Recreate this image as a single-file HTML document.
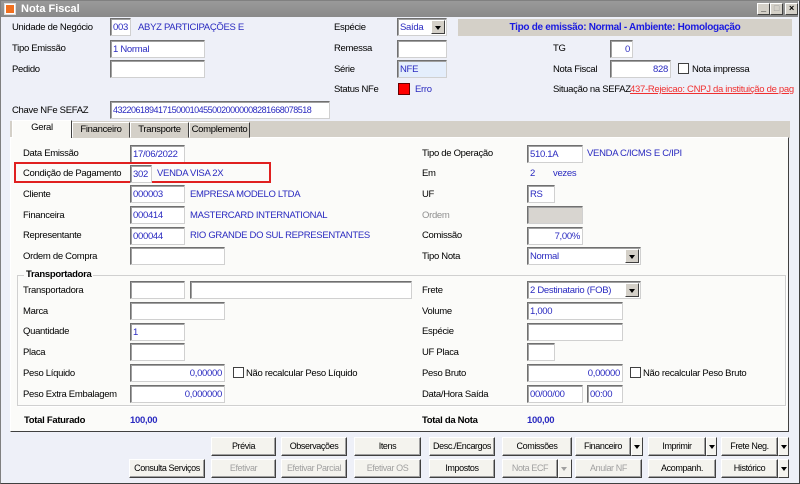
<!DOCTYPE html>
<html><head><meta charset="utf-8"><style>
*{box-sizing:border-box;margin:0;padding:0}
body{width:800px;height:484px;overflow:hidden;background:#eef0f8;font-family:"Liberation Sans",sans-serif;font-size:9.5px;letter-spacing:-0.3px;color:#000;position:relative}
.a{position:absolute;white-space:nowrap}
.win{position:absolute;left:0;top:0;width:800px;height:484px;border:1px solid #808080;border-right-color:#404040;border-bottom-color:#404040}
.tb{position:absolute;left:1px;top:1px;width:797px;height:16px;background:linear-gradient(#9a9a9a,#8a8a8a);color:#fff;font-weight:bold;font-size:11px;letter-spacing:0;line-height:16px;padding-left:20px}
.tbb{position:absolute;top:3px;width:13px;height:12px;background:#d4d0c8;border:1px solid;border-color:#fff #404040 #404040 #fff;font-size:9px;line-height:9px;text-align:center;color:#000;font-weight:bold}
.l{position:absolute;white-space:nowrap;line-height:12px}
.i{position:absolute;height:18px;background:#fff;border:1px solid;border-color:#707070 #d0d0d0 #d0d0d0 #707070;box-shadow:inset 1px 1px 0 #a0a0a0;color:#2a2ac0;line-height:17px;padding:0 2px;white-space:nowrap;overflow:hidden}
.r{text-align:right}
.v{position:absolute;color:#2a2ac0;white-space:nowrap;line-height:12px}
.dd{position:absolute;right:1px;top:1px;width:14px;height:14px;background:#d4d0c8;border:1px solid;border-color:#fff #404040 #404040 #fff}
.dd:after{content:"";position:absolute;left:3px;top:5px;border:3px solid transparent;border-top:4px solid #000;border-bottom:0}
.cb{position:absolute;width:11px;height:11px;background:#fff;border:1px solid #404040}
.btn{position:absolute;height:19px;background:#f4f3ee;border:1px solid;border-color:#fff #404040 #404040 #fff;box-shadow:inset -1px -1px 0 #a0a0a0;text-align:center;line-height:17px;font-size:9px;letter-spacing:-0.4px;white-space:nowrap;overflow:hidden}
.dis{color:#a0a0a0}
.ar{position:absolute;height:19px;background:#f4f3ee;border:1px solid;border-color:#fff #404040 #404040 #fff}
.ar:after{content:"";position:absolute;left:2px;top:7px;border:3px solid transparent;border-top:4px solid #000;border-bottom:0}
.ar.dis:after{border-top-color:#a0a0a0}
.tab{position:absolute;top:122px;height:16px;border:1px solid;border-color:#fff #404040 transparent #fff;line-height:14px;text-align:center;background:#d4d0c8}
</style></head><body>
<div class="win"></div>
<div class="tb">Nota Fiscal</div>
<div class="a" style="left:4px;top:3px;width:12px;height:12px;background:#fff;border:1px solid #ddd"><div style="margin:1px;width:8px;height:8px;background:#f07020"></div></div>
<div class="tbb" style="left:757px">_</div><div class="tbb" style="left:770px;color:#999">□</div><div class="tbb" style="left:785px">×</div>

<div class="l" style="left:12px;top:22px">Unidade de Negócio</div>
<div class="i" style="left:110px;top:18px;width:21px">003</div>
<div class="v" style="left:138px;top:22px">ABYZ PARTICIPAÇÕES E</div>
<div class="l" style="left:334px;top:22px">Espécie</div>
<div class="i" style="left:397px;top:18px;width:50px;color:#2a2ac0">Saída<div class="dd"></div></div>
<div class="a" style="left:458px;top:19px;width:334px;height:17px;background:#d4d0c8;color:#1a1ae0;font-weight:bold;text-align:center;line-height:17px;font-size:10px">Tipo de emissão: Normal - Ambiente: Homologação</div>

<div class="l" style="left:12px;top:43px">Tipo Emissão</div>
<div class="i" style="left:110px;top:40px;width:95px">1 Normal</div>
<div class="l" style="left:334px;top:43px">Remessa</div>
<div class="i" style="left:397px;top:40px;width:50px"></div>
<div class="l" style="left:553px;top:43px">TG</div>
<div class="i r" style="left:610px;top:40px;width:23px">0</div>

<div class="l" style="left:12px;top:64px">Pedido</div>
<div class="i" style="left:110px;top:60px;width:95px"></div>
<div class="l" style="left:334px;top:64px">Série</div>
<div class="i" style="left:397px;top:60px;width:50px;background:#e4eefc">NFE</div>
<div class="l" style="left:553px;top:64px">Nota Fiscal</div>
<div class="i r" style="left:610px;top:60px;width:61px">828</div>
<div class="cb" style="left:678px;top:63px"></div>
<div class="l" style="left:692px;top:64px">Nota impressa</div>

<div class="l" style="left:334px;top:84px">Status NFe</div>
<div class="a" style="left:398px;top:83px;width:12px;height:12px;background:#f00;border:1px solid #600"></div>
<div class="v" style="left:415px;top:84px">Erro</div>
<div class="l" style="left:553px;top:84px">Situação na SEFAZ</div>
<div class="a" style="left:630px;top:84px;color:#f03030;text-decoration:underline;line-height:12px;width:164px;overflow:hidden">437-Rejeicao: CNPJ da instituição de pagar</div>

<div class="l" style="left:12px;top:105px">Chave NFe SEFAZ</div>
<div class="i" style="left:110px;top:101px;width:220px;font-size:9px;letter-spacing:-0.5px">43220618941715000104550020000008281668078518</div>

<div class="a" style="left:10px;top:121px;width:780px;height:17px;background:#d4d0c8"></div>
<div class="a" style="left:10px;top:137px;width:779px;height:295px;background:#fbfbf9;border:1px solid;border-color:#fff #404040 #404040 #fff"></div>
<div class="tab" style="left:12px;width:60px;top:120px;height:18px;background:#fbfbf9;border-bottom:none">Geral</div>
<div class="tab" style="left:72px;width:58px">Financeiro</div>
<div class="tab" style="left:130px;width:59px">Transporte</div>
<div class="tab" style="left:189px;width:61px">Complemento</div>

<div class="l" style="left:23px;top:148px">Data Emissão</div>
<div class="i" style="left:130px;top:145px;width:55px">17/06/2022</div>
<div class="a" style="left:14px;top:162px;width:257px;height:21px;border:2px solid #e02020"></div>
<div class="l" style="left:23px;top:168px">Condição de Pagamento</div>
<div class="i" style="left:130px;top:165px;width:22px">302</div>
<div class="v" style="left:157px;top:168px">VENDA VISA 2X</div>
<div class="l" style="left:23px;top:189px">Cliente</div>
<div class="i" style="left:130px;top:185px;width:55px">000003</div>
<div class="v" style="left:190px;top:189px">EMPRESA MODELO LTDA</div>
<div class="l" style="left:23px;top:210px">Financeira</div>
<div class="i" style="left:130px;top:206px;width:55px">000414</div>
<div class="v" style="left:190px;top:210px">MASTERCARD INTERNATIONAL</div>
<div class="l" style="left:23px;top:230px">Representante</div>
<div class="i" style="left:130px;top:227px;width:55px">000044</div>
<div class="v" style="left:190px;top:230px">RIO GRANDE DO SUL REPRESENTANTES</div>
<div class="l" style="left:23px;top:251px">Ordem de Compra</div>
<div class="i" style="left:130px;top:247px;width:95px"></div>

<div class="l" style="left:422px;top:148px">Tipo de Operação</div>
<div class="i" style="left:527px;top:145px;width:56px">510.1A</div>
<div class="v" style="left:587px;top:148px">VENDA C/ICMS E C/IPI</div>
<div class="l" style="left:422px;top:168px">Em</div>
<div class="v" style="left:530px;top:168px">2</div><div class="v" style="left:553px;top:168px">vezes</div>
<div class="l" style="left:422px;top:189px">UF</div>
<div class="i" style="left:527px;top:185px;width:28px">RS</div>
<div class="l" style="left:422px;top:210px;color:#909090">Ordem</div>
<div class="i" style="left:527px;top:206px;width:56px;background:#d8d5d0"></div>
<div class="l" style="left:422px;top:230px">Comissão</div>
<div class="i r" style="left:527px;top:227px;width:56px">7,00%</div>
<div class="l" style="left:422px;top:251px">Tipo Nota</div>
<div class="i" style="left:527px;top:247px;width:114px">Normal<div class="dd"></div></div>

<div class="a" style="left:17px;top:275px;width:769px;height:131px;border:1px solid #d0d0d0;box-shadow:1px 1px 0 #fff"></div>
<div class="a" style="left:24px;top:269px;padding:0 2px;background:#fbfbf9;font-weight:bold;line-height:12px">Transportadora</div>

<div class="l" style="left:23px;top:285px">Transportadora</div>
<div class="i" style="left:130px;top:281px;width:55px"></div>
<div class="i" style="left:190px;top:281px;width:222px"></div>
<div class="l" style="left:422px;top:285px">Frete</div>
<div class="i" style="left:527px;top:281px;width:114px">2 Destinatario (FOB)<div class="dd"></div></div>
<div class="l" style="left:23px;top:306px">Marca</div>
<div class="i" style="left:130px;top:302px;width:95px"></div>
<div class="l" style="left:422px;top:306px">Volume</div>
<div class="i" style="left:527px;top:302px;width:96px">1,000</div>
<div class="l" style="left:23px;top:326px">Quantidade</div>
<div class="i" style="left:130px;top:323px;width:55px">1</div>
<div class="l" style="left:422px;top:326px">Espécie</div>
<div class="i" style="left:527px;top:323px;width:96px"></div>
<div class="l" style="left:23px;top:347px">Placa</div>
<div class="i" style="left:130px;top:343px;width:55px"></div>
<div class="l" style="left:422px;top:347px">UF Placa</div>
<div class="i" style="left:527px;top:343px;width:28px"></div>
<div class="l" style="left:23px;top:368px">Peso Líquido</div>
<div class="i r" style="left:130px;top:364px;width:95px">0,00000</div>
<div class="cb" style="left:233px;top:367px"></div>
<div class="l" style="left:246px;top:368px">Não recalcular Peso Líquido</div>
<div class="l" style="left:422px;top:368px">Peso Bruto</div>
<div class="i r" style="left:527px;top:364px;width:96px">0,00000</div>
<div class="cb" style="left:630px;top:367px"></div>
<div class="l" style="left:643px;top:368px">Não recalcular Peso Bruto</div>
<div class="l" style="left:23px;top:389px">Peso Extra Embalagem</div>
<div class="i r" style="left:130px;top:385px;width:95px">0,000000</div>
<div class="l" style="left:422px;top:389px">Data/Hora Saída</div>
<div class="i" style="left:527px;top:385px;width:56px">00/00/00</div>
<div class="i" style="left:587px;top:385px;width:36px">00:00</div>

<div class="l" style="left:24px;top:415px;font-weight:bold">Total Faturado</div>
<div class="v" style="left:130px;top:415px;font-weight:bold">100,00</div>
<div class="l" style="left:422px;top:415px;font-weight:bold">Total da Nota</div>
<div class="v" style="left:527px;top:415px;font-weight:bold">100,00</div>

<div class="btn" style="left:211px;top:437px;width:65px">Prévia</div>
<div class="btn" style="left:281px;top:437px;width:66px">Observações</div>
<div class="btn" style="left:354px;top:437px;width:67px">Itens</div>
<div class="btn" style="left:429px;top:437px;width:66px">Desc./Encargos</div>
<div class="btn" style="left:502px;top:437px;width:70px">Comissões</div>
<div class="btn" style="left:575px;top:437px;width:56px">Financeiro</div><div class="ar" style="left:631px;top:437px;width:12px"></div>
<div class="btn" style="left:648px;top:437px;width:58px">Imprimir</div><div class="ar" style="left:706px;top:437px;width:11px"></div>
<div class="btn" style="left:721px;top:437px;width:57px">Frete Neg.</div><div class="ar" style="left:778px;top:437px;width:11px"></div>

<div class="btn" style="left:129px;top:459px;width:76px">Consulta Serviços</div>
<div class="btn dis" style="left:211px;top:459px;width:65px">Efetivar</div>
<div class="btn dis" style="left:281px;top:459px;width:66px">Efetivar Parcial</div>
<div class="btn dis" style="left:354px;top:459px;width:67px">Efetivar OS</div>
<div class="btn" style="left:429px;top:459px;width:66px">Impostos</div>
<div class="btn dis" style="left:502px;top:459px;width:56px">Nota ECF</div><div class="ar dis" style="left:558px;top:459px;width:14px"></div>
<div class="btn dis" style="left:575px;top:459px;width:67px">Anular NF</div>
<div class="btn" style="left:648px;top:459px;width:68px">Acompanh.</div>
<div class="btn" style="left:721px;top:459px;width:57px">Histórico</div><div class="ar" style="left:778px;top:459px;width:11px"></div>
</body></html>
